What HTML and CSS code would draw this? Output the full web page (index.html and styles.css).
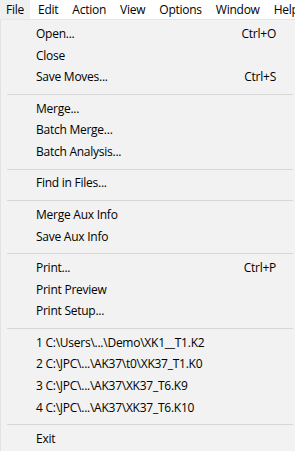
FILE: index.html
```html
<!DOCTYPE html>
<html lang="en">
<head>
    <meta charset="UTF-8">
    <title>File Menu</title>
    <link rel="stylesheet" href="styles.css">
</head>
<body>
    <div class="menubar">
        <div class="menubar-item active">File</div>
        <div class="menubar-item">Edit</div>
        <div class="menubar-item">Action</div>
        <div class="menubar-item">View</div>
        <div class="menubar-item">Options</div>
        <div class="menubar-item">Window</div>
        <div class="menubar-item">Help</div>
    </div>

    <div class="dropdown">
        <div class="item"><span>Open...</span><span class="key">Ctrl+O</span></div>
        <div class="item"><span>Close</span></div>
        <div class="item"><span>Save Moves...</span><span class="key">Ctrl+S</span></div>
        <div class="sep"></div>
        <div class="item"><span>Merge...</span></div>
        <div class="item"><span>Batch Merge...</span></div>
        <div class="item"><span>Batch Analysis...</span></div>
        <div class="sep"></div>
        <div class="item"><span>Find in Files...</span></div>
        <div class="sep"></div>
        <div class="item"><span>Merge Aux Info</span></div>
        <div class="item"><span>Save Aux Info</span></div>
        <div class="sep"></div>
        <div class="item"><span>Print...</span><span class="key">Ctrl+P</span></div>
        <div class="item"><span>Print Preview</span></div>
        <div class="item"><span>Print Setup...</span></div>
        <div class="sep"></div>
        <div class="item"><span>1 C:\Users\...\Demo\XK1__T1.K2</span></div>
        <div class="item"><span>2 C:\JPC\...\AK37\t0\XK37_T1.K0</span></div>
        <div class="item"><span>3 C:\JPC\...\AK37\XK37_T6.K9</span></div>
        <div class="item"><span>4 C:\JPC\...\AK37\XK37_T6.K10</span></div>
        <div class="sep"></div>
        <div class="item"><span>Exit</span></div>
    </div>
</body>
</html>
```

FILE: styles.css
```css
* {
    margin: 0;
    padding: 0;
    box-sizing: border-box;
}

body {
    width: 295px;
    height: 451px;
    overflow: hidden;
    background: #f2f2f2;
    font-family: 'Open Sans', 'Noto Sans', sans-serif;
    font-size: 12px;
    letter-spacing: -0.25px;
    color: #000;
}

.menubar {
    display: flex;
    height: 20px;
    background: #fff;
    border-bottom: 1px solid #e6e6e6;
    white-space: nowrap;
    overflow: hidden;
}

.menubar-item {
    flex-shrink: 0;
    padding: 0 7px;
    line-height: 19px;
}

.menubar-item.active {
    background: #f0f0f0;
    height: 20px;
    padding: 0 6px;
    margin-right: 1px;
}

.dropdown {
    padding-top: 3px;
    border-left: 1px solid #e2e2e2;
    height: 431px;
}

.item {
    display: flex;
    height: 21.67px;
    line-height: 21.67px;
    padding-left: 35px;
    padding-right: 19px;
    white-space: nowrap;
}

.item .key {
    margin-left: auto;
}

.sep {
    height: 1px;
    background: #d7d7d7;
    margin: 6px 2px 2.75px 6px;
}
```
